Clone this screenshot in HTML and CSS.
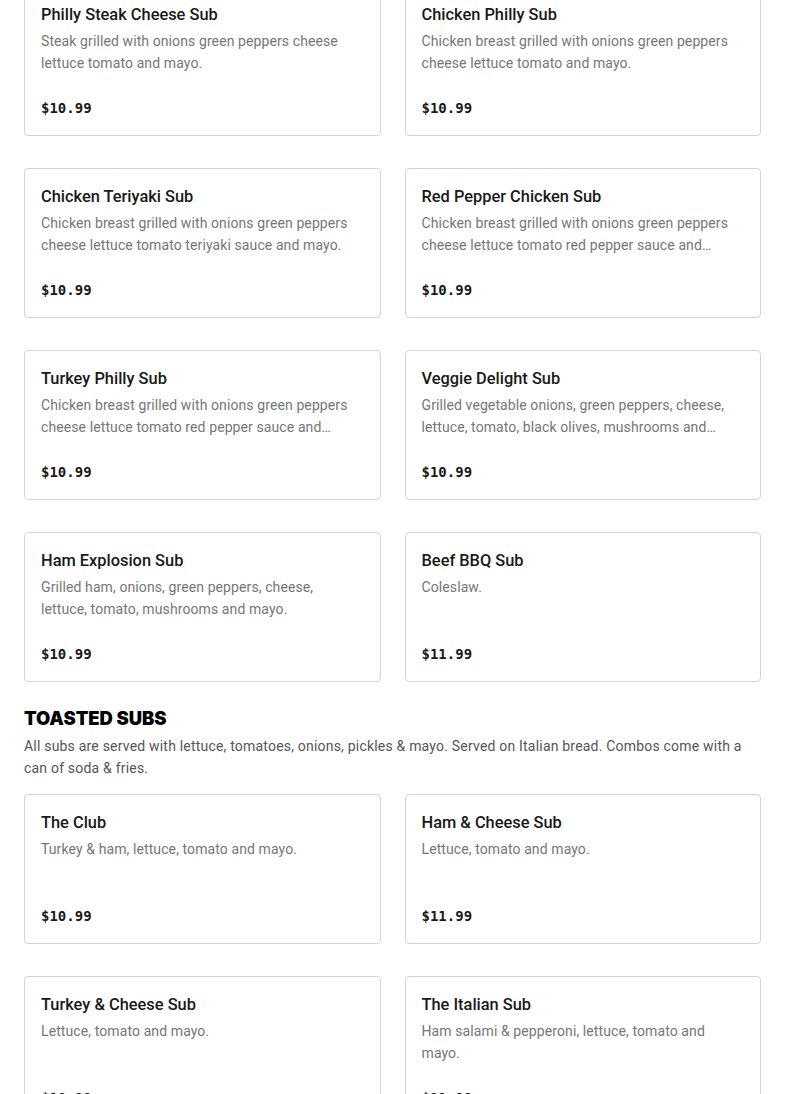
FILE: index.html
```html
<!DOCTYPE html>
<html>
<head>
<meta charset="utf-8">
<link rel="stylesheet" href="styles.css">
</head>
<body>
<main class="menu">
  <section class="grid">
    <article class="card"><h3 class="card-title">Philly Steak Cheese Sub</h3><p class="card-desc">Steak grilled with onions green peppers cheese lettuce tomato and mayo.</p><div class="price">$10.99</div></article>
    <article class="card"><h3 class="card-title">Chicken Philly Sub</h3><p class="card-desc">Chicken breast grilled with onions green peppers cheese lettuce tomato and mayo.</p><div class="price">$10.99</div></article>
    <article class="card"><h3 class="card-title">Chicken Teriyaki Sub</h3><p class="card-desc">Chicken breast grilled with onions green peppers cheese lettuce tomato teriyaki sauce and mayo.</p><div class="price">$10.99</div></article>
    <article class="card"><h3 class="card-title">Red Pepper Chicken Sub</h3><p class="card-desc">Chicken breast grilled with onions green peppers cheese lettuce tomato red pepper sauce and mayo.</p><div class="price">$10.99</div></article>
    <article class="card"><h3 class="card-title">Turkey Philly Sub</h3><p class="card-desc">Chicken breast grilled with onions green peppers cheese lettuce tomato red pepper sauce and mayo.</p><div class="price">$10.99</div></article>
    <article class="card"><h3 class="card-title">Veggie Delight Sub</h3><p class="card-desc">Grilled vegetable onions, green peppers, cheese, lettuce, tomato, black olives, mushrooms and mayo.</p><div class="price">$10.99</div></article>
    <article class="card"><h3 class="card-title">Ham Explosion Sub</h3><p class="card-desc">Grilled ham, onions, green peppers, cheese, lettuce, tomato, mushrooms and mayo.</p><div class="price">$10.99</div></article>
    <article class="card"><h3 class="card-title">Beef BBQ Sub</h3><p class="card-desc">Coleslaw.</p><div class="price">$11.99</div></article>
  </section>
  <header class="section-head">
    <h2 class="section-title">TOASTED SUBS</h2>
    <p class="section-desc">All subs are served with lettuce, tomatoes, onions, pickles &amp; mayo. Served on Italian bread. Combos come with a can of soda &amp; fries.</p>
  </header>
  <section class="grid">
    <article class="card"><h3 class="card-title">The Club</h3><p class="card-desc">Turkey &amp; ham, lettuce, tomato and mayo.</p><div class="price">$10.99</div></article>
    <article class="card"><h3 class="card-title">Ham &amp; Cheese Sub</h3><p class="card-desc">Lettuce, tomato and mayo.</p><div class="price">$11.99</div></article>
    <article class="card"><h3 class="card-title">Turkey &amp; Cheese Sub</h3><p class="card-desc">Lettuce, tomato and mayo.</p><div class="price">$10.99</div></article>
    <article class="card"><h3 class="card-title">The Italian Sub</h3><p class="card-desc">Ham salami &amp; pepperoni, lettuce, tomato and mayo.</p><div class="price">$11.99</div></article>
  </section>
</main>
</body>
</html>
```
FILE: styles.css
```css
* { box-sizing: border-box; }
html, body { margin: 0; padding: 0; background: #fff; }
body { font-family: Roboto, "Noto Sans", sans-serif; color: #191919; }
.menu { padding: 0 24px; margin-top: -14px; }
.grid { display: grid; grid-template-columns: 1fr 1fr; gap: 32px 24px; }
.card { border: 1px solid #d4d4d4; border-radius: 4px; padding: 15px 22px 17px 16px; display: flex; flex-direction: column; height: 150px; }
.card-title { margin: 0; font-size: 16.4px; font-weight: 500; line-height: 26px; color: #191919; }
.card-desc { margin: 2px 0 0; font-size: 14px; line-height: 22px; color: #767676; height: 44px; overflow: hidden; display: -webkit-box; -webkit-line-clamp: 2; -webkit-box-orient: vertical; letter-spacing: 0.1px; }
.price { margin-top: auto; font-family: "DejaVu Sans Mono", "Liberation Mono", monospace; font-weight: 700; font-size: 14px; line-height: 20px; color: #191919; }
.section-head { padding: 24px 0 15px; }
.section-title { margin: 0; font-family: Inter, Roboto, sans-serif; font-size: 18.4px; font-weight: 900; line-height: 24px; color: #000; }
.section-desc { margin: 5px 0 0; font-size: 14px; line-height: 22px; color: #555; letter-spacing: 0.2px; }
```
